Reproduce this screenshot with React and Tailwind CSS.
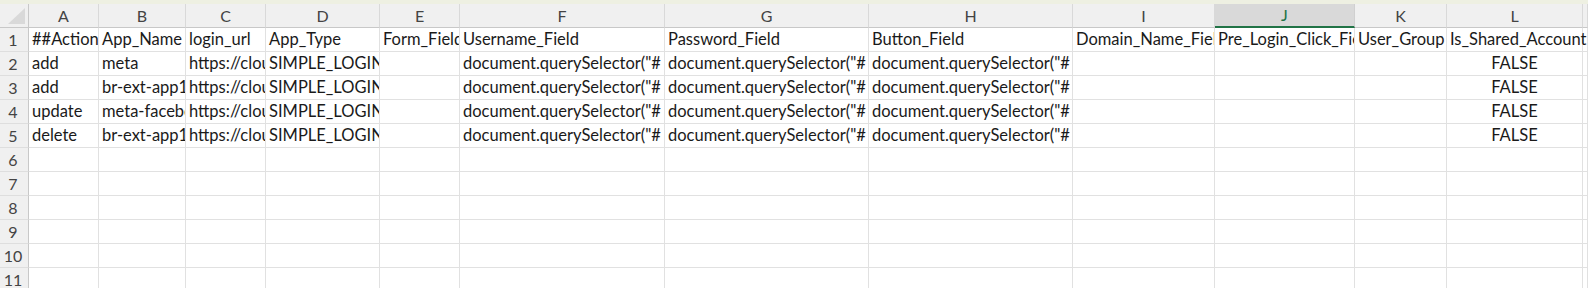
import React from "react";

const cols = ["A","B","C","D","E","F","G","H","I","J","K","L",""];
const q = 'document.querySelector("#';
const rows = [
  ["##Actions","App_Name","login_url","App_Type","Form_Field","Username_Field","Password_Field","Button_Field","Domain_Name_Field","Pre_Login_Click_Field","User_Group","Is_Shared_Account",""],
  ["add","meta","https://cloud.example.com/login","SIMPLE_LOGIN","",q,q,q,"","","","FALSE",""],
  ["add","br-ext-app1","https://cloud.example.com/login","SIMPLE_LOGIN","",q,q,q,"","","","FALSE",""],
  ["update","meta-facebook","https://cloud.example.com/login","SIMPLE_LOGIN","",q,q,q,"","","","FALSE",""],
  ["delete","br-ext-app1","https://cloud.example.com/login","SIMPLE_LOGIN","",q,q,q,"","","","FALSE",""],
  [],[],[],[],[],[],
];

const font = { fontFamily: '"Lato", "Noto Sans", sans-serif' };

export default function App() {
  return (
    <div className="w-[1588px] h-[288px] overflow-hidden bg-white text-[16.5px] text-[#1a1a1a]" style={font}>
      <div className="h-[4px] bg-[#eef0e2]" />
      <div className="grid grid-cols-[29px_70px_87px_80px_114px_80px_205px_204px_204px_142px_140px_92px_136px_1fr]">
        <div className="h-[24px] bg-[#f0f0f0] border-r border-b border-[#c8c8c8] relative">
          <div className="absolute right-[3px] bottom-[3px] w-0 h-0 border-l-[17px] border-l-transparent border-b-[16px] border-b-[#d9d9d9]" />
        </div>
        {cols.map((c, i) =>
          c === "J" ? (
            <div key={i} className="h-[24px] bg-[#d9d9d9] border-r border-[#d0d0d0] border-b-2 border-b-[#217346] flex items-center justify-center text-[#217346] text-[16px] leading-none">
              {c}
            </div>
          ) : (
            <div key={i} className="h-[24px] bg-[#f0f0f0] border-r border-b border-r-[#d9d9d9] border-b-[#c8c8c8] flex items-center justify-center text-[#444] text-[16px] leading-none">
              {c}
            </div>
          )
        )}
        {rows.map((r, ri) => (
          <React.Fragment key={ri}>
            <div className="h-[24px] bg-[#f0f0f0] border-r border-b border-r-[#c8c8c8] border-b-[#dedede] flex items-center justify-center text-[#444] text-[16px] leading-none pr-[2px]">
              {ri + 1}
            </div>
            {cols.map((_, ci) => {
              const v = r[ci] || "";
              const center = v === "FALSE";
              const overflow = ri === 0 && ci === 11;
              return (
                <div
                  key={ci}
                  className={
                    "h-[24px] border-r border-b border-[#e1e1e1] flex items-end pb-[2px] whitespace-nowrap leading-[19px] " +
                    (center ? "justify-center " : "pl-[3px] ") +
                    (overflow ? "overflow-visible relative z-10" : "overflow-hidden")
                  }
                >
                  {v}
                </div>
              );
            })}
          </React.Fragment>
        ))}
      </div>
    </div>
  );
}
